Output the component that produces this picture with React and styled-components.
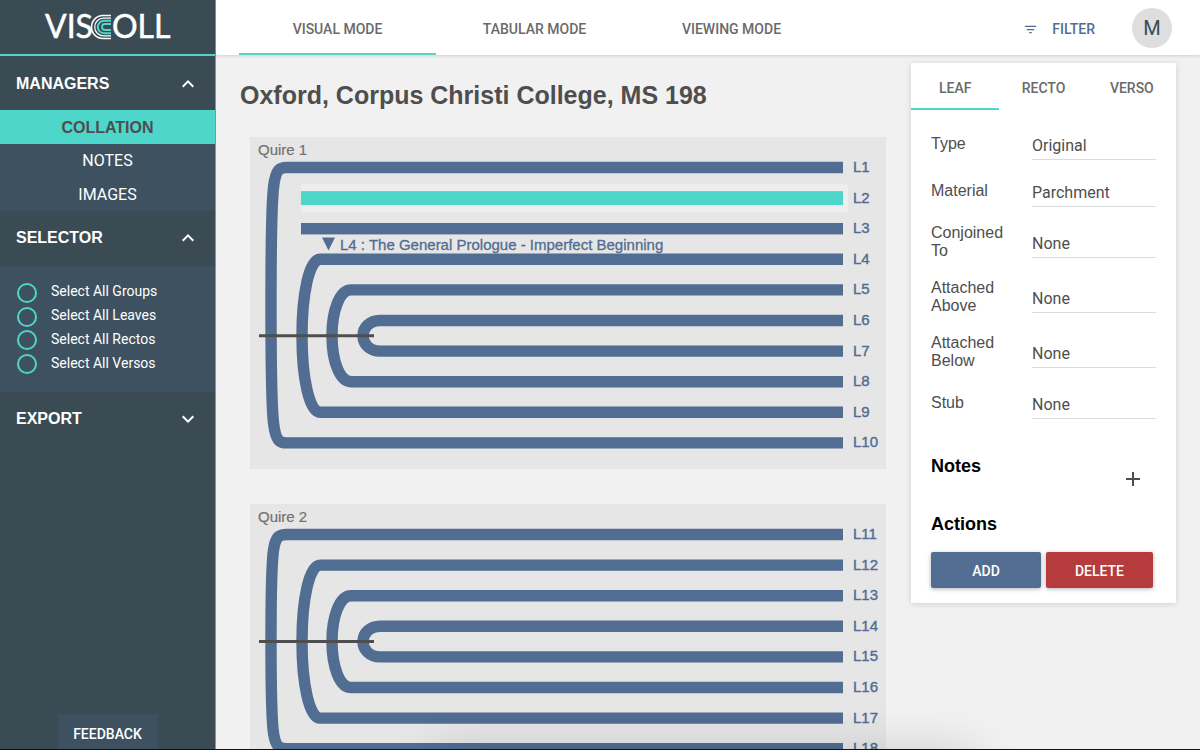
import React from "react";
import styled, { createGlobalStyle } from "styled-components";
import { MdAdd, MdExpandLess, MdExpandMore, MdFilterList } from "react-icons/md";

const sans = `"Liberation Sans", Arial, sans-serif`;
const roboto = `Roboto, "Liberation Sans", sans-serif`;

const color = {
  teal: "#4ed6cb",
  blue: "#526d92",
  red: "#b53b3c",
  dark: "#3a4b54",
  slate: "#3e5160",
  page: "#f1f1f1",
  canvas: "#e6e6e6",
  text: "#4e4e4e",
  muted: "#6a6a6a",
};

const GlobalStyle = createGlobalStyle`
  *, *::before, *::after { box-sizing: border-box; }
  body { margin: 0; background: ${color.page}; font-family: ${roboto}; color: ${color.text}; }
  button, select, input { font: inherit; color: inherit; margin: 0; }
  button { border: 0; padding: 0; background: none; cursor: pointer; }
  h1, h2, h3 { margin: 0; }
`;

const Shell = styled.div`
  display: grid;
  grid-template-columns: 216px minmax(0, 1fr);
  height: 100vh;
  overflow: hidden;
  border-bottom: 1px solid #111;
`;

const Sidebar = styled.aside`
  display: flex;
  flex-direction: column;
  min-height: 0;
  background: ${color.dark};
  border-right: 1px solid #8b939a;
  color: #fff;
`;

const Brand = styled.a`
  display: flex;
  align-items: center;
  justify-content: center;
  height: 56px;
  flex: none;
  border-bottom: 2px solid ${color.teal};
`;

const SectionToggle = styled.button`
  display: flex;
  align-items: center;
  justify-content: space-between;
  width: 100%;
  height: ${(p) => (p.$tall ? "55px" : "54px")};
  flex: none;
  padding: ${(p) => (p.$tall ? "0 15px 2px 16px" : "2px 15px 0 16px")};
  font: bold 16px/20px ${sans};
  text-align: left;
`;

const Menu = styled.nav`
  display: grid;
  grid-template-rows: repeat(3, 1fr);
  height: 101px;
  flex: none;
  background: ${color.slate};
`;

const MenuItem = styled.a`
  display: flex;
  align-items: center;
  justify-content: center;
  padding-top: ${(p) => (p.$active ? "2px" : "1px")};
  font-size: 16px;
  font-weight: ${(p) => (p.$active ? 700 : 400)};
  font-family: ${(p) => (p.$active ? sans : roboto)};
  color: ${(p) => (p.$active ? color.text : "#fff")};
  background: ${(p) => (p.$active ? color.teal : "transparent")};
  text-decoration: none;
`;

const SelectorList = styled.div`
  display: grid;
  grid-template-rows: repeat(4, 1fr);
  height: 126px;
  flex: none;
  padding: 15px 16px 16px 17px;
  background: ${color.slate};
`;

const RadioRow = styled.label`
  display: flex;
  align-items: center;
  gap: 14px;
  font-size: 14px;
  line-height: 20px;
`;

const RadioText = styled.span`
  padding-bottom: 3px;
`;

const Radio = styled.input`
  appearance: none;
  width: 20px;
  height: 20px;
  border: 2px solid ${color.teal};
  border-radius: 50%;
`;

const Feedback = styled.button`
  align-self: center;
  margin-top: auto;
  width: 100px;
  height: 35px;
  flex: none;
  padding-top: 4px;
  background: ${color.slate};
  font-size: 14px;
  font-weight: 500;
`;

const Main = styled.main`
  display: flex;
  flex-direction: column;
  min-width: 0;
  min-height: 0;
`;

const TopBar = styled.header`
  display: flex;
  align-items: center;
  flex: none;
  height: 55px;
  padding: 0 28px 0 23px;
  background: #fff;
  box-shadow: 0 1px 3px rgba(0, 0, 0, 0.14);
  z-index: 1;
`;

const ModeTabs = styled.div`
  display: flex;
  flex: 0 1 591px;
  align-self: stretch;
`;

const Tab = styled.button`
  flex: 1;
  border-bottom: 2px solid ${(p) => (p.$active ? color.teal : "transparent")};
  padding-top: 4px;
  color: ${color.muted};
  font-size: 14px;
  font-weight: 500;
`;

const FilterButton = styled.button`
  display: flex;
  align-items: center;
  gap: 14px;
  margin-left: auto;
  padding-top: 3px;
  color: ${color.blue};
  font-size: 14px;
  font-weight: 500;
`;

const Avatar = styled.button`
  width: 40px;
  height: 40px;
  margin-left: 37px;
  border-radius: 50%;
  background: #dedede;
  color: ${color.dark};
  font-size: 20px;
`;

const Workspace = styled.div`
  display: grid;
  grid-template-columns: minmax(0, 1fr) 265px;
  align-items: start;
  gap: 25px;
  min-height: 0;
  flex: 1;
  overflow: hidden;
  padding: 0 24px;
`;

const Manuscript = styled.section`
  padding-top: 25px;
`;

const Title = styled.h1`
  font: bold 25px/30px ${sans};
`;

const Quires = styled.div`
  display: flex;
  flex-direction: column;
  gap: 35px;
  padding: 27px 0 0 10px;
`;

const QuireCanvas = styled.svg`
  display: block;
  width: 100%;
  height: auto;
  background: ${color.canvas};
  font-family: ${sans};
  font-size: 15px;
`;

const Panel = styled.aside`
  margin-top: 8px;
  padding-bottom: 15px;
  background: #fff;
  box-shadow: 0 1px 6px rgba(0, 0, 0, 0.14);
`;

const PanelTabs = styled.div`
  display: flex;
  height: 47px;
`;

const Fields = styled.div`
  padding: 10px 20px 0;
`;

const Field = styled.div`
  display: grid;
  grid-template-columns: 81px minmax(0, 1fr);
  column-gap: 20px;
  align-items: center;
  min-height: ${(p) => (p.$double ? "55px" : "47px")};
`;

const FieldLabel = styled.label`
  padding-top: 1px;
  font: 16px/18px ${sans};
`;

const FieldSelect = styled.select`
  appearance: none;
  width: 100%;
  height: 33px;
  padding: 4px 0 0;
  border: 0;
  border-bottom: 1px solid #dcdcdc;
  border-radius: 0;
  background: transparent;
  font-family: ${roboto};
  font-size: 16px;
`;

const PanelHeading = styled.h2`
  font: bold 18px/20px ${sans};
  color: #000;
`;

const NotesRow = styled.div`
  display: flex;
  justify-content: space-between;
  align-items: flex-start;
  padding: 30px 31px 0 20px;
`;

const AddNote = styled.button`
  display: flex;
  margin-top: 11px;
  color: ${color.text};
`;

const Actions = styled.div`
  padding: 23px 23px 0 20px;
`;

const ActionRow = styled.div`
  display: grid;
  grid-template-columns: 110fr 107fr;
  gap: 5px;
  margin-top: 18px;
`;

const ActionButton = styled.button`
  height: 36px;
  padding-top: 2px;
  border-radius: 2px;
  background: ${(p) => (p.$danger ? color.red : color.blue)};
  box-shadow: 0 1px 4px rgba(0, 0, 0, 0.3);
  color: #fff;
  font-size: 14px;
  font-weight: 500;
`;

const BottomShade = styled.div`
  position: fixed;
  bottom: -28px;
  left: 37%;
  right: 19%;
  height: 20px;
  box-shadow: 0 0 48px 4px rgba(0, 0, 0, 0.2);
  pointer-events: none;
`;

function Logo() {
  return (
    <svg width="128" height="40" viewBox="0 0 128 40" role="img" aria-label="VisColl">
      <g fill="#fff" stroke="#fff" strokeWidth="0.500" fontFamily="Lato, sans-serif" fontSize="32">
        <text x="1" y="31">VIS</text>
        <text x="68" y="31">OLL</text>
      </g>
      <g fill="none">
        <path d="M67 8.500H59a11.500 11.500 0 0 0 0 23h8" stroke="#fff" strokeWidth="1.500" />
        <path d="M67 11.200H59.500a8.800 8.800 0 0 0 0 17.600h7.500" stroke="#fff" strokeWidth="1.200" />
        <path d="M67 13.800H60a6.200 6.200 0 0 0 0 12.400h7" stroke={color.teal} strokeWidth="2" />
        <path d="M67 17H61a3 3 0 0 0 0 6h6" stroke={color.teal} strokeWidth="1.800" />
      </g>
    </svg>
  );
}

const RIGHT = 593;
const PITCH = 30.6;
const leafY = (i) => 30.5 + PITCH * i;

const SPINES = [
  { x: 113, start: 130 },
  { x: 82, start: 101 },
  { x: 52, start: 70 },
  { x: 21, start: 37 },
];

function bifolium(top, bottom, depth) {
  const { x, start } = SPINES[depth];
  const y1 = leafY(top);
  const y2 = leafY(bottom);
  const mid = (y1 + y2) / 2;
  const h = mid - y1;
  const sx = (start - x) * (depth === 3 ? 0.1 : 0.4);
  const sy = h * (depth === 3 ? 0.04 : 0.45);
  return `M${RIGHT} ${y1}H${start}C${x + sx} ${y1} ${x} ${y1 + sy} ${x} ${mid}C${x} ${y2 - sy} ${x + sx} ${y2} ${start} ${y2}H${RIGHT}`;
}

function Quire({ number, firstLeaf, leaves, height, pairs, singles = [], selected, note }) {
  const mid = (leafY(pairs[0][0]) + leafY(pairs[0][1])) / 2;
  return (
    <QuireCanvas viewBox={`0 0 636 ${height}`}>
      <text x="8" y="18" fill="#727272" stroke="#727272" strokeWidth="0.200">Quire {number}</text>
      {singles.map((i) =>
        i === selected ? (
          <g key={i}>
            <rect x="51" y={leafY(i) - 14} width="547" height="28" fill="#eeeeee" />
            <rect x="51" y={leafY(i) - 7} width={RIGHT - 51} height="14" fill={color.teal} />
          </g>
        ) : (
          <rect key={i} x="51" y={leafY(i) - 5.7} width={RIGHT - 51} height="11.4" fill={color.blue} />
        )
      )}
      {pairs.map(([a, b], depth) => (
        <path key={a} d={bifolium(a, b, depth)} fill="none" stroke={color.blue} strokeWidth="11.4" />
      ))}
      <path d={`M9 ${mid}H124`} stroke={color.text} strokeWidth="3" />
      {note && (
        <g fill={color.blue}>
          <path d="M72 100.500H85L78.500 113.500Z" />
          <text x="90" y="113" stroke={color.blue} strokeWidth="0.300">{note}</text>
        </g>
      )}
      {Array.from({ length: leaves }, (_, i) => (
        <text
          key={i}
          x="603"
          y={Math.floor(leafY(i) + 5)}
          fill={color.blue}
          stroke={color.blue}
          strokeWidth="0.400"
        >
          L{firstLeaf + i}
        </text>
      ))}
    </QuireCanvas>
  );
}

const FIELDS = [
  ["Type", "Original"],
  ["Material", "Parchment"],
  ["Conjoined To", "None", true],
  ["Attached Above", "None", true],
  ["Attached Below", "None", true],
  ["Stub", "None"],
];

export default function App() {
  return (
    <>
      <GlobalStyle />
      <Shell>
        <Sidebar>
          <Brand href="#home"><Logo /></Brand>
          <SectionToggle>MANAGERS<MdExpandLess size={24} /></SectionToggle>
          <Menu>
            <MenuItem href="#collation" $active>COLLATION</MenuItem>
            <MenuItem href="#notes">NOTES</MenuItem>
            <MenuItem href="#images">IMAGES</MenuItem>
          </Menu>
          <SectionToggle $tall>SELECTOR<MdExpandLess size={24} /></SectionToggle>
          <SelectorList>
            {["Groups", "Leaves", "Rectos", "Versos"].map((kind) => (
              <RadioRow key={kind}>
                <Radio type="radio" name="selectAll" value={kind} />
                <RadioText>Select All {kind}</RadioText>
              </RadioRow>
            ))}
          </SelectorList>
          <SectionToggle $tall>EXPORT<MdExpandMore size={24} /></SectionToggle>
          <Feedback>FEEDBACK</Feedback>
        </Sidebar>
        <Main>
          <TopBar>
            <ModeTabs>
              <Tab $active>VISUAL MODE</Tab>
              <Tab>TABULAR MODE</Tab>
              <Tab>VIEWING MODE</Tab>
            </ModeTabs>
            <FilterButton><MdFilterList size={15} />FILTER</FilterButton>
            <Avatar>M</Avatar>
          </TopBar>
          <Workspace>
            <Manuscript>
              <Title>Oxford, Corpus Christi College, MS 198</Title>
              <Quires>
                <Quire
                  number={1}
                  firstLeaf={1}
                  leaves={10}
                  height={332}
                  pairs={[[5, 6], [4, 7], [3, 8], [0, 9]]}
                  singles={[1, 2]}
                  selected={1}
                  note="L4 : The General Prologue - Imperfect Beginning"
                />
                <Quire
                  number={2}
                  firstLeaf={11}
                  leaves={8}
                  height={271}
                  pairs={[[3, 4], [2, 5], [1, 6], [0, 7]]}
                />
              </Quires>
            </Manuscript>
            <Panel>
              <PanelTabs>
                <Tab $active>LEAF</Tab>
                <Tab>RECTO</Tab>
                <Tab>VERSO</Tab>
              </PanelTabs>
              <Fields>
                {FIELDS.map(([label, value, double]) => (
                  <Field key={label} $double={double}>
                    <FieldLabel htmlFor={label}>{label}</FieldLabel>
                    <FieldSelect id={label}><option>{value}</option></FieldSelect>
                  </Field>
                ))}
              </Fields>
              <NotesRow>
                <PanelHeading>Notes</PanelHeading>
                <AddNote aria-label="Add note"><MdAdd size={24} /></AddNote>
              </NotesRow>
              <Actions>
                <PanelHeading>Actions</PanelHeading>
                <ActionRow>
                  <ActionButton>ADD</ActionButton>
                  <ActionButton $danger>DELETE</ActionButton>
                </ActionRow>
              </Actions>
            </Panel>
          </Workspace>
        </Main>
      </Shell>
      <BottomShade />
    </>
  );
}
